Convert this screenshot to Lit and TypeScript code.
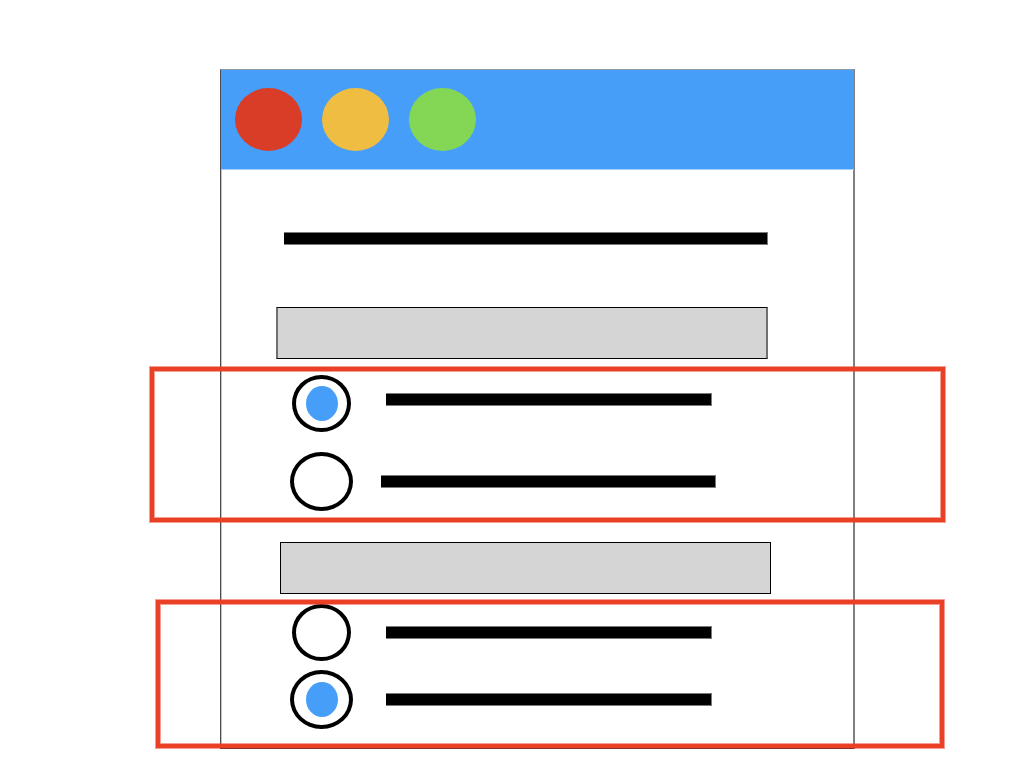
import { LitElement, html, css } from "lit";
import { customElement, state } from "lit/decorators.js";
import { classMap } from "lit/directives/class-map.js";

interface Option {
  large: boolean;
  wide: boolean;
  raised: boolean;
}

interface Question {
  name: string;
  options: Option[];
}

const QUESTIONS: Question[] = [
  {
    name: "first",
    options: [
      { large: false, wide: false, raised: true },
      { large: true, wide: true, raised: false },
    ],
  },
  {
    name: "second",
    options: [
      { large: false, wide: false, raised: false },
      { large: true, wide: false, raised: false },
    ],
  },
];

@customElement("app-root")
export class AppRoot extends LitElement {
  @state() private picked: number[] = [0, 1];

  static styles = css`
    :host {
      display: block;
      font-family: "Liberation Sans", Arial, sans-serif;
    }
    * {
      box-sizing: border-box;
    }
    .page {
      display: grid;
      grid-template-columns: 220fr 635fr 169fr;
      padding: 69px 0 19px;
      background: #fff;
    }
    .window {
      grid-column: 2;
      border-style: solid;
      border-width: 1px 2px 1px 1px;
      border-color: #8a9aae #808080 #222 #4d4d4d;
      box-shadow: inset 1px 0 #c4c4c4;
      padding-bottom: 19px;
    }
    .titlebar {
      display: flex;
      align-items: center;
      gap: 20px;
      height: 100px;
      margin-right: -1px;
      padding: 0 14px 1px;
      background: #479ef8;
      border-bottom: 1px solid #a3cffb;
    }
    .light {
      width: 67px;
      height: 63px;
      padding: 0;
      border: 0;
      border-radius: 50%;
    }
    .close {
      background: #d93c27;
    }
    .minimise {
      background: #efbd42;
    }
    .maximise {
      background: #83d754;
    }
    .line {
      display: block;
      height: 13px;
      background: #000;
      border: 1px solid #7a7a7a;
      border-left: 0;
    }
    .heading {
      margin: 62px 85px 62px 63px;
    }
    .prompt {
      height: 52px;
      background: #d5d5d5;
      border: 1px solid #000;
    }
    .prompt.first {
      margin: 0 85px 16px 55px;
      border-width: 1px 2px;
      border-color: #000 #707070;
    }
    .prompt.second {
      margin: 31px 82px 10px 59px;
    }
    .group {
      position: relative;
      display: flex;
      flex-direction: column;
      gap: 20px;
      padding-left: 69px;
    }
    .group.second {
      gap: 9px;
    }
    /* Highlight frame drawn over the window's edges */
    .group::after {
      content: "";
      position: absolute;
      inset: -8px -92px -11px -71px;
      border: 4px solid #ea4025;
      box-shadow:
        0 0 0 1px rgba(234, 64, 37, 0.5),
        inset 0 0 0 1px rgba(234, 64, 37, 0.5);
      pointer-events: none;
    }
    .group.second::after {
      inset: -4px -91px -19px -65px;
    }
    .option {
      display: grid;
      grid-template-columns: 63px 1fr;
      align-items: center;
      column-gap: 33px;
      padding-right: 141px;
    }
    .option.wide {
      column-gap: 28px;
      padding-right: 137px;
    }
    .option.raised .line {
      margin-bottom: 8px;
    }
    .radio {
      appearance: none;
      display: grid;
      place-content: center;
      justify-self: center;
      width: 59px;
      height: 57px;
      margin: 0;
      border: 4px solid #000;
      border-radius: 50%;
      background: #fff;
    }
    .option.large .radio {
      width: 63px;
      height: 59px;
    }
    .radio:checked::before {
      content: "";
      width: 32px;
      height: 35px;
      border-radius: 50%;
      background: #479ef8;
    }
  `;

  private pick(question: number, option: number) {
    this.picked = this.picked.map((p, i) => (i === question ? option : p));
  }

  private renderQuestion(question: Question, q: number) {
    return html`
      <div class="prompt ${question.name}"></div>
      <div class="group ${question.name}" role="radiogroup">
        ${question.options.map(
          (o, i) => html`
            <label
              class=${classMap({
                option: true,
                large: o.large,
                wide: o.wide,
                raised: o.raised,
              })}
            >
              <input
                class="radio"
                type="radio"
                name=${question.name}
                aria-label="Option ${i + 1}"
                .checked=${this.picked[q] === i}
                @change=${() => this.pick(q, i)}
              />
              <span class="line"></span>
            </label>
          `
        )}
      </div>
    `;
  }

  render() {
    return html`
      <main class="page">
        <section class="window">
          <header class="titlebar">
            <button class="light close" aria-label="Close"></button>
            <button class="light minimise" aria-label="Minimise"></button>
            <button class="light maximise" aria-label="Maximise"></button>
          </header>
          <div class="line heading"></div>
          ${QUESTIONS.map((question, q) => this.renderQuestion(question, q))}
        </section>
      </main>
    `;
  }
}
